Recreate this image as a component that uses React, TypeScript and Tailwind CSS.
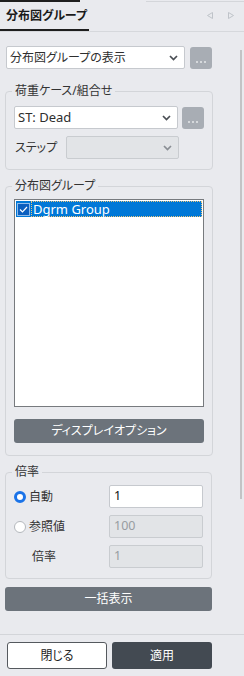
import React from 'react'

const font = "font-['Noto_Sans','Noto_Sans_CJK_JP',sans-serif] [font-feature-settings:'palt']"

function Chevron({ disabled }: { disabled?: boolean }) {
  return (
    <svg width="9" height="6" viewBox="0 0 9 6" className="shrink-0">
      <polyline
        points="1,1 4.5,4.5 8,1"
        fill="none"
        stroke={disabled ? '#8a8e94' : '#4a4e54'}
        strokeWidth="1.7"
      />
    </svg>
  )
}

function Select({ label, disabled, className }: { label?: string; disabled?: boolean; className?: string }) {
  return (
    <div
      className={`h-[23px] flex items-center justify-between pl-[3px] pr-[6px] border rounded-[2px] ${
        disabled ? 'bg-[#e2e4e7] border-[#c9ccd0]' : 'bg-white border-[#c6c9ce]'
      } ${className ?? ''}`}
    >
      <span className="text-[12px] text-[#2e2e2e] leading-[17px] whitespace-nowrap">{label}</span>
      <Chevron disabled={disabled} />
    </div>
  )
}

function DotsButton({ className }: { className?: string }) {
  return (
    <button className={`h-[22px] w-[22px] rounded-[3px] bg-[#a8adb4] flex items-end justify-center pb-[6px] gap-[2px] ${className ?? ''}`}>
      <span className="w-[2px] h-[2px] bg-[#d6d9dc]" />
      <span className="w-[2px] h-[2px] bg-[#d6d9dc]" />
      <span className="w-[2px] h-[2px] bg-[#d6d9dc]" />
    </button>
  )
}

function Group({ title, children, className }: { title: string; children: React.ReactNode; className?: string }) {
  return (
    <fieldset className={`border border-[#d3d5d9] rounded-[4px] px-[8px] ${className ?? ''}`}>
      <legend className="ml-[-2px] px-[3px] text-[12px] leading-[16px] text-[#333]">{title}</legend>
      {children}
    </fieldset>
  )
}

function Radio({ checked, label }: { checked?: boolean; label: string }) {
  return (
    <div className="flex items-center gap-[3px]">
      {checked ? (
        <span className="w-[12px] h-[12px] rounded-full border-[3.5px] border-[#1a73e8] bg-white" />
      ) : (
        <span className="w-[12px] h-[12px] rounded-full border border-[#b4b8bd] bg-white" />
      )}
      <span className="text-[12px] text-[#333] leading-[16px]">{label}</span>
    </div>
  )
}

function Field({ value, disabled }: { value: string; disabled?: boolean }) {
  return (
    <div
      className={`w-[94px] h-[23px] flex items-center px-[4px] border rounded-[2px] text-[12.5px] ${
        disabled ? 'bg-[#e2e4e7] border-[#c9ccd0] text-[#989ca1]' : 'bg-white border-[#c6c9ce] text-[#111]'
      }`}
    >
      {value}
    </div>
  )
}

export default function App() {
  return (
    <div className={`w-[244px] h-[676px] bg-[#e9eaee] flex flex-col overflow-hidden text-[#333] ${font}`}>
      <div className="flex flex-col h-[32px] border-b border-[#d6d8dc] shrink-0">
        <div className="flex h-[2px] justify-between">
          <div className="w-[80px] h-[2px] bg-[#1e1e1e]" />
          <div className="w-[98px] h-[1px] mt-[1px] bg-[#d4d6da]" />
        </div>
        <div className="flex flex-1 justify-between">
          <div className="w-[89px] border-b-2 border-[#1e1e1e] flex items-center pl-[6px] text-[12px] font-bold text-[#1a1a1a]">
            分布図グループ
          </div>
          <div className="flex items-center gap-[15px] pr-[10px] pb-[2px]">
            <svg width="6" height="7" viewBox="0 0 6 7">
              <polygon points="5.5,0.5 5.5,6.5 0.5,3.5" fill="none" stroke="#bfc3c9" strokeWidth="1" />
            </svg>
            <svg width="6" height="7" viewBox="0 0 6 7">
              <polygon points="0.5,0.5 0.5,6.5 5.5,3.5" fill="none" stroke="#bfc3c9" strokeWidth="1" />
            </svg>
          </div>
        </div>
      </div>

      <div className="relative flex-1 overflow-hidden">
        <div className="ml-[5px] w-[207px] pt-[14px] flex flex-col">
          <div className="flex items-center gap-[5px] pl-[1px]">
            <Select label="分布図グループの表示" className="w-[180px]" />
            <DotsButton />
          </div>

          <Group title="荷重ケース/組合せ" className="mt-[14px] pt-[7px] pb-[10px]">
            <div className="flex items-center gap-[4px]">
              <Select label="ST: Dead" className="w-[164px] [&>span]:text-[13px]" />
              <DotsButton />
            </div>
            <div className="flex items-center mt-[7px]">
              <span className="w-[52px] pl-[1px] text-[12px] leading-[16px]">ステップ</span>
              <Select disabled className="w-[113px]" />
            </div>
          </Group>

          <Group title="分布図グループ" className="mt-[8px] pt-[5px] pb-[12px]">
            <div className="h-[208px] w-[190px] bg-white border border-[#777a7e] p-[1px]">
              <div className="h-[16px] bg-[#0078d7] flex items-center pl-[1px]">
                <span className="w-[13px] h-[13px] bg-[#0b5fbf] border border-[#8fbbea] flex items-center justify-center">
                  <svg width="9" height="7" viewBox="0 0 9 7">
                    <polyline points="1,3.5 3.5,6 8,1" fill="none" stroke="#ffffff" strokeWidth="1.2" />
                  </svg>
                </span>
                <span className="ml-[1px] flex-1 h-[16px] border border-dotted border-[#e9c57c] text-white text-[13px] leading-[14px] pl-[1px]">
                  Dgrm Group
                </span>
              </div>
            </div>
            <button className="mt-[12px] w-[190px] h-[24px] rounded-[3px] bg-[#6c737b] text-white text-[12px]">
              ディスプレイオプション
            </button>
          </Group>

          <Group title="倍率" className="mt-[8px] pt-[5px] pb-[10px]">
            <div className="flex flex-col gap-[7px]">
              <div className="flex items-center justify-between">
                <Radio checked label="自動" />
                <Field value="1" />
              </div>
              <div className="flex items-center justify-between">
                <Radio label="参照値" />
                <Field value="100" disabled />
              </div>
              <div className="flex items-center justify-between">
                <span className="pl-[18px] text-[12px] leading-[16px]">倍率</span>
                <Field value="1" disabled />
              </div>
            </div>
          </Group>

          <button className="mt-[8px] h-[24px] rounded-[3px] bg-[#6c737b] text-white text-[12px]">一括表示</button>
        </div>

        <div className="absolute right-[2px] top-[18px] w-[2px] h-[449px] bg-[#c2c3c5]" />
      </div>

      <div className="h-[42px] shrink-0 border-t border-[#d3d5d9] flex gap-[5px] pl-[7px] pt-[7px]">
        <button className="w-[100px] h-[27px] rounded-[3px] bg-white border border-[#55595e] text-[12px] text-[#222]">
          閉じる
        </button>
        <button className="w-[100px] h-[27px] rounded-[3px] bg-[#434a52] text-white text-[12px]">適用</button>
      </div>
    </div>
  )
}
